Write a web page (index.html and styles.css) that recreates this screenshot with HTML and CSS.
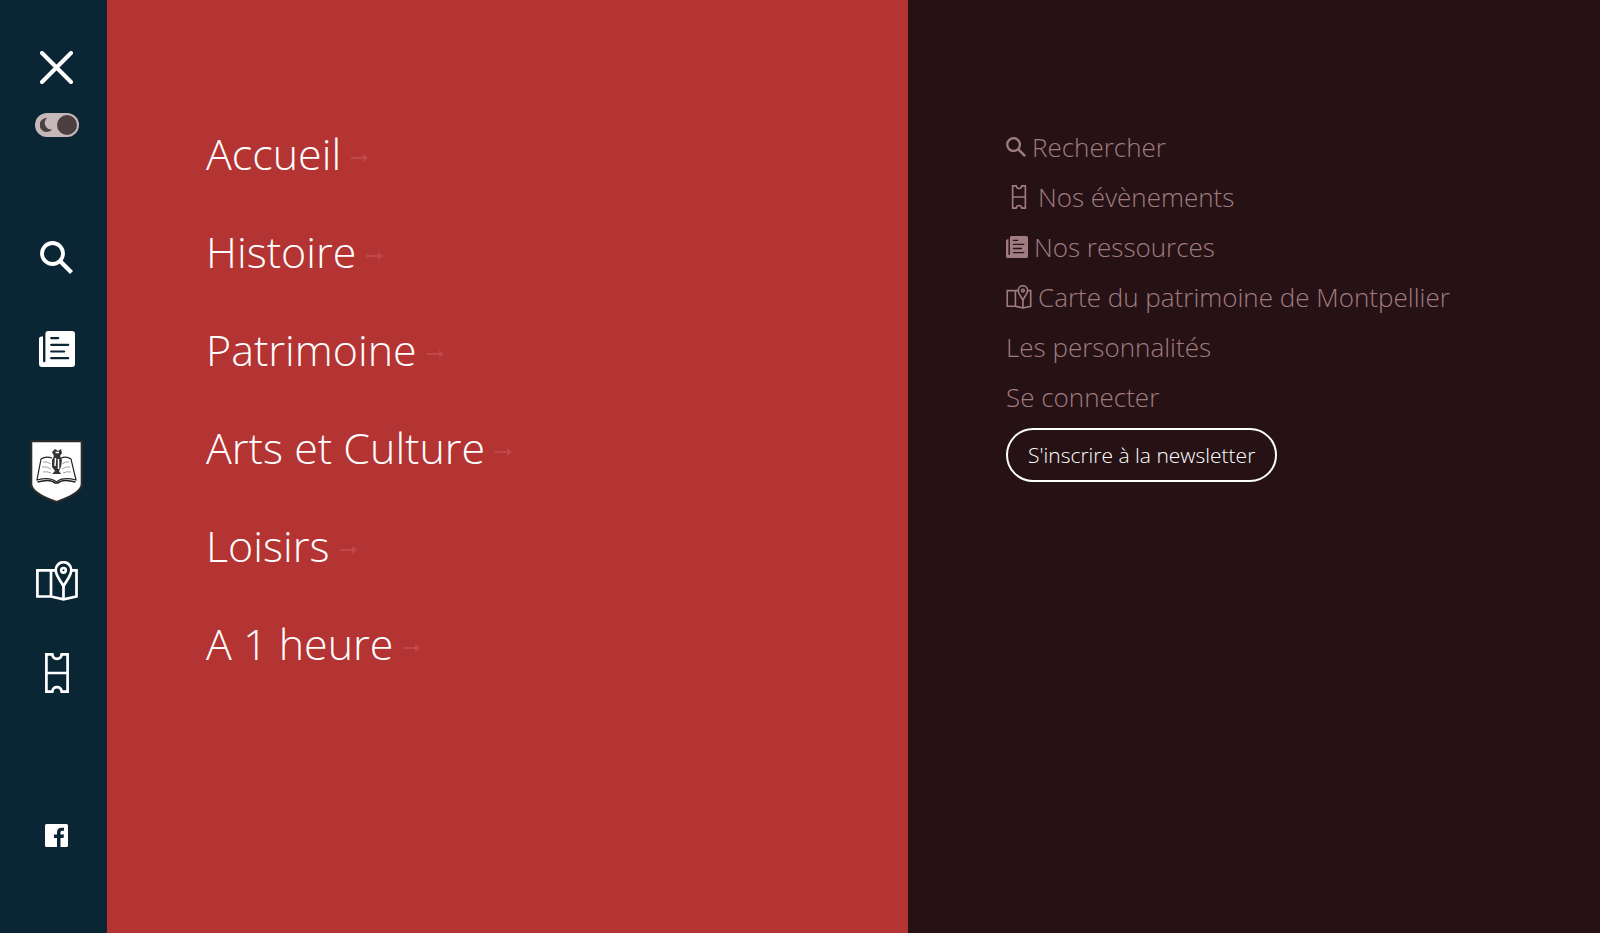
FILE: index.html
```html
<!DOCTYPE html>
<html lang="fr">
<head>
<meta charset="utf-8">
<meta name="viewport" content="width=device-width, initial-scale=1">
<title>Menu</title>
<link rel="stylesheet" href="styles.css">
</head>
<body>
<svg class="sprite" aria-hidden="true">
  <symbol id="i-search" viewBox="0 0 33 33"><circle cx="12.500" cy="12.500" r="10.500" fill="none" stroke="currentColor" stroke-width="3.800"/><path d="M20.500 20.500 31.500 31.500" stroke="currentColor" stroke-width="4.200"/></symbol>
  <symbol id="i-news" viewBox="0 0 36 36"><path fill="currentColor" fill-rule="evenodd" d="M9.500 0H33a3 3 0 0 1 3 3v30a3 3 0 0 1-3 3H3a3 3 0 0 1-3-3V8a2.500 2.500 0 0 1 2.500-2.500H4V30a1.200 1.200 0 0 0 2.400 0V3a3 3 0 0 1 3.100-3ZM12.200 6a1 1 0 0 0 0 2.200h7a1 1 0 0 0 0-2.200ZM12.200 12.700a1 1 0 0 0 0 2.200h17a1 1 0 0 0 0-2.200ZM12.200 19.400a1 1 0 0 0 0 2.200h13a1 1 0 0 0 0-2.200ZM12.200 26.100a1 1 0 0 0 0 2.200h17a1 1 0 0 0 0-2.200Z"/></symbol>
  <symbol id="i-map" viewBox="0 0 42 40"><g fill="none" stroke="currentColor" stroke-width="2.700"><path d="M19.500 9.300H1.400V35.500H15L27.500 38.400 40.500 35.500V9.300H35.500M15 9V35.500M27.500 25V38.500"/><path d="M27.500 25C23.500 18 19.700 14.500 19.700 9a7.700 7.700 0 0 1 15.600 0C35.300 14.500 31.500 18 27.500 25Z"/><circle cx="27.500" cy="9.300" r="2.300"/></g></symbol>
  <symbol id="i-ticket" viewBox="0 0 24 40"><path fill="none" stroke="currentColor" stroke-width="2.700" d="M1.400 1.400H7.300Q8 5.800 12 5.800T16.700 1.400H22.600V38.600H16.700Q16 34.200 12 34.200T7.300 38.600H1.400ZM1.400 20H22.600"/></symbol>
</svg>
<div class="layout">
  <aside class="sidebar">
    <button class="icon-button close" type="button" aria-label="Fermer le menu">
      <svg width="33" height="33" viewBox="0 0 33 33"><path d="M2 2 31 31M31 2 2 31" stroke="currentColor" stroke-width="4" stroke-linecap="round"/></svg>
    </button>
    <label class="theme">
      <input class="theme-input" type="checkbox" role="switch" aria-label="Mode sombre" checked>
      <svg class="theme-moon" width="12" height="14" viewBox="0 0 12 14"><path fill="currentColor" d="M7 0A7 7 0 1 0 12 11.500 6.600 6.600 0 0 1 7 0Z"/></svg>
    </label>
    <nav class="tools" aria-label="Raccourcis">
      <a class="tool" href="#recherche" aria-label="Rechercher"><svg width="33" height="33"><use href="#i-search"/></svg></a>
      <a class="tool" href="#ressources" aria-label="Nos ressources"><svg width="36" height="36"><use href="#i-news"/></svg></a>
      <a class="crest" href="#accueil" aria-label="Accueil">
        <svg width="53" height="63" viewBox="0 0 53 63">
          <path d="M1.200 1.200H51.800V44C51.800 52 38 58 26.500 62 15 58 1.200 52 1.200 44Z" fill="#fff" stroke="#2a2a2a" stroke-width="2.200"/>
          <g fill="none" stroke="#222" stroke-width="1.200">
            <path d="M22 18C18 16.500 14 17 11 19L7 40C14 38 22 38 26.500 42 31 38 38 38 46 40L41 19C38 17 35 16.500 31 18"/>
            <path d="M7.500 42C15 40 22 40 25 43H28C31 40 38 40 45.500 42" stroke-width="1.700"/>
            <path d="M13 22Q17 21 21 24M12 27Q17 26 21 29M13 32Q17 31 21 33M32 24Q36 21 39 22M32 29Q36 26 40 27M33 33Q37 31 41 32" stroke="#888" stroke-width=".8"/>
          </g>
          <path fill="#333" d="M25 9 28 11 31 9 32 13 30 16 32 20 31 27 29 31 31 34H22L25 31 22 27 22 20 24 16 22 12Z"/>
          <path d="M25.500 12.500H29M25.500 18 25 26M28.500 19V29" stroke="#fff" stroke-width="1.500"/>
        </svg>
      </a>
      <a class="tool" href="#carte" aria-label="Carte du patrimoine"><svg width="42" height="40"><use href="#i-map"/></svg></a>
      <a class="tool" href="#evenements" aria-label="Nos évènements"><svg width="24" height="40"><use href="#i-ticket"/></svg></a>
    </nav>
    <a class="social" href="#facebook" aria-label="Facebook">
      <svg width="23" height="23" viewBox="0 0 23 23"><path fill="currentColor" d="M1.500 0H21.500A1.500 1.500 0 0 1 23 1.500V21.500A1.500 1.500 0 0 1 21.500 23H15.500V14H18.500L19 10.500H15.500V8.500C15.500 7.200 16.200 6.700 17.500 6.700H19V3.700H16.500C13.500 3.700 12 5.500 12 8.200V10.500H9V14H12V23H1.500A1.500 1.500 0 0 1 0 21.500V1.500A1.500 1.500 0 0 1 1.500 0Z"/></svg>
    </a>
  </aside>
  <nav class="main-menu" aria-label="Menu principal">
    <a class="main-link" href="#accueil">Accueil<svg class="arrow" width="17" height="10" viewBox="0 0 17 10"><path d="M0 4H12V1L17 5 12 9V6H0Z"/></svg></a>
    <a class="main-link" href="#histoire">Histoire<svg class="arrow" width="17" height="10" viewBox="0 0 17 10"><path d="M0 4H12V1L17 5 12 9V6H0Z"/></svg></a>
    <a class="main-link" href="#patrimoine">Patrimoine<svg class="arrow" width="17" height="10" viewBox="0 0 17 10"><path d="M0 4H12V1L17 5 12 9V6H0Z"/></svg></a>
    <a class="main-link" href="#arts">Arts et Culture<svg class="arrow" width="17" height="10" viewBox="0 0 17 10"><path d="M0 4H12V1L17 5 12 9V6H0Z"/></svg></a>
    <a class="main-link" href="#loisirs">Loisirs<svg class="arrow" width="17" height="10" viewBox="0 0 17 10"><path d="M0 4H12V1L17 5 12 9V6H0Z"/></svg></a>
    <a class="main-link" href="#une-heure">A 1 heure<svg class="arrow" width="17" height="10" viewBox="0 0 17 10"><path d="M0 4H12V1L17 5 12 9V6H0Z"/></svg></a>
  </nav>
  <nav class="side-menu" aria-label="Menu secondaire">
    <a class="side-link" href="#recherche"><svg width="20" height="20"><use href="#i-search"/></svg>Rechercher</a>
    <a class="side-link" href="#evenements"><svg width="26" height="24"><use href="#i-ticket"/></svg>Nos évènements</a>
    <a class="side-link" href="#ressources"><svg width="22" height="22"><use href="#i-news"/></svg>Nos ressources</a>
    <a class="side-link" href="#carte"><svg width="26" height="24"><use href="#i-map"/></svg>Carte du patrimoine de Montpellier</a>
    <a class="side-link" href="#personnalites">Les personnalités</a>
    <a class="side-link" href="#connexion">Se connecter</a>
    <button class="newsletter" type="button">S'inscrire à la newsletter</button>
  </nav>
</div>
</body>
</html>
```
FILE: styles.css
```css
* { box-sizing: border-box; }
body {
  margin: 0;
  background: #261214;
  color: #fff;
  font-family: "Open Sans", "Noto Sans", sans-serif;
  font-weight: 300;
}
a { color: inherit; text-decoration: none; }
button { font: inherit; color: inherit; background: none; cursor: pointer; }
svg { display: block; flex: none; }
.sprite { position: absolute; width: 0; height: 0; }

.layout {
  display: grid;
  grid-template-columns: 107px 801fr 692fr;
  min-height: 100vh;
}

.sidebar {
  display: flex;
  flex-direction: column;
  align-items: center;
  padding: 51px 0 86px 6px;
  background: #0a2533;
}
.icon-button { padding: 0; border: 0; }
.theme {
  display: flex;
  position: relative;
  margin-top: 29px;
}
.theme-input {
  appearance: none;
  display: flex;
  justify-content: flex-end;
  align-items: center;
  width: 44px;
  height: 24px;
  margin: 0;
  padding: 2px;
  border-radius: 12px;
  background: #c6b8b9;
  cursor: pointer;
}
.theme-input::after {
  content: "";
  width: 20px;
  height: 20px;
  border-radius: 50%;
  background: #4c3f42;
}
.theme-moon {
  position: absolute;
  top: 5px;
  left: 5px;
  color: #4c3f42;
  pointer-events: none;
}
.tools {
  display: flex;
  flex-direction: column;
  align-items: center;
  margin-top: 74px;
}
.tool {
  display: flex;
  align-items: center;
  justify-content: center;
  width: 60px;
  height: 92px;
}
.crest { margin: 45px 0 32px; }
.social { margin-top: auto; }

.main-menu {
  display: flex;
  flex-direction: column;
  align-items: flex-start;
  padding: 105px 99px;
  background: #b43433;
}
.main-link {
  display: flex;
  align-items: center;
  gap: 10px;
  font-size: 43px;
  line-height: 98px;
}
.arrow { margin-top: 8px; fill: #c04848; }

.side-menu {
  display: flex;
  flex-direction: column;
  align-items: flex-start;
  padding: 122px 98px;
}
.side-link {
  display: flex;
  align-items: center;
  gap: 6px;
  color: #a07c80;
  font-size: 26px;
  line-height: 50px;
}
.newsletter {
  height: 54px;
  margin-top: 6px;
  padding: 0 20px;
  border: 2px solid #fff;
  border-radius: 27px;
  font-size: 21px;
}
```
